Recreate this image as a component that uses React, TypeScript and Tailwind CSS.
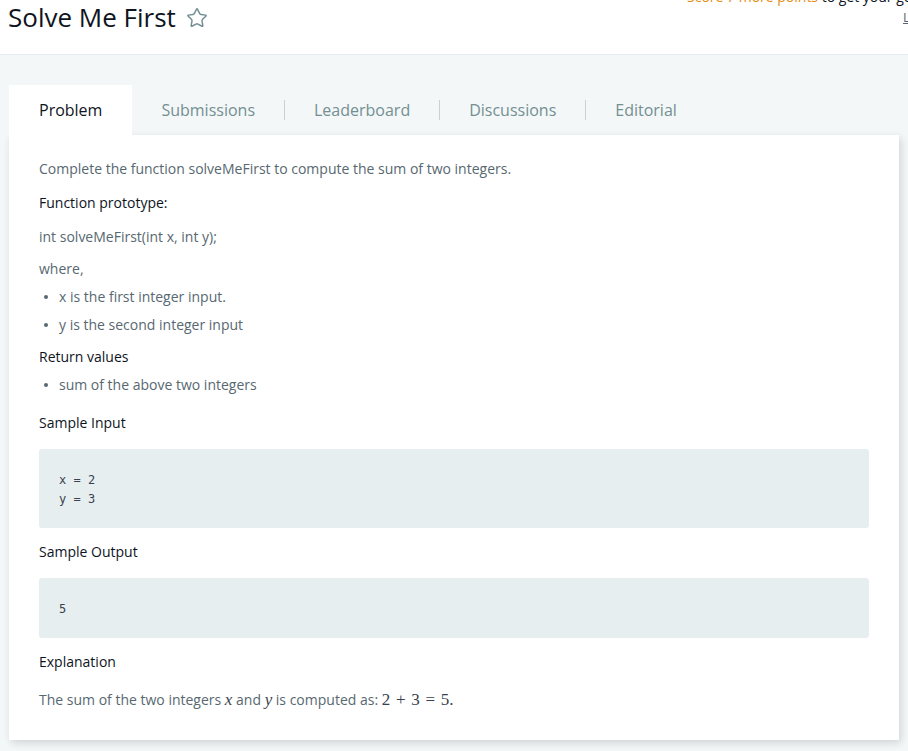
import React from "react";
import { Star } from "lucide-react";

const TABS = ["Problem", "Submissions", "Leaderboard", "Discussions", "Editorial"];

const Bullet = ({ children }: { children: React.ReactNode }) => (
  <div className="flex items-center leading-[20px]">
    <span className="ml-[5px] mr-[11px] h-[4px] w-[4px] rounded-full bg-[#576871]" />
    <span>{children}</span>
  </div>
);

const Pre = ({ lines }: { lines: string[] }) => (
  <pre className="rounded-[3px] bg-[#e7eeef] px-[20px] pt-[22px] pb-[19px] font-['DejaVu_Sans_Mono',monospace] text-[12px] leading-[19px] text-[#39424e]">
    {lines.join("\n")}
  </pre>
);

const MathOp = ({ children }: { children: React.ReactNode }) => (
  <span className="mx-[4px] inline-block w-[13px] text-center">{children}</span>
);

export default function App() {
  return (
    <div className="relative min-h-[751px] overflow-hidden bg-[#f3f7f7] font-['Open_Sans',sans-serif]">
      {/* Header */}
      <div className="relative h-[55px] border-b border-[#e6ecee] bg-white">
        <div className="flex items-center pl-[8px] pt-[1px]">
          <h1 className="text-[26px] leading-[32px] text-[#0e141e]">Solve Me First</h1>
          <Star className="ml-[10px] mt-[1px] h-[22px] w-[22px] text-[#738f93]" strokeWidth={1.6} />
        </div>
        <div className="absolute left-[687px] top-[-13px] whitespace-nowrap text-[14px] leading-[20px]">
          <span className="text-[#e38d13]">Score 7 more points</span>
          <span className="text-[#0e141e]"> to get your gold badge!</span>
        </div>
        <div className="absolute left-[903px] top-[8px] whitespace-nowrap text-[13px] leading-[18px] text-[#576871] underline">
          Learn more
        </div>
      </div>

      {/* Body */}
      <div className="px-[9px] pt-[30px] pb-[12px]">
        <div className="flex h-[50px] items-center">
          {TABS.map((tab, i) => (
            <React.Fragment key={tab}>
              {i > 1 && <span className="h-[20px] w-px bg-[#c9d1d4]" />}
              <div
                className={
                  i === 0
                    ? "flex h-full items-center bg-white px-[30px] text-[16px] text-[#0e141e]"
                    : "flex h-full items-center px-[29px] text-[16px] text-[#738f93]"
                }
              >
                {tab}
              </div>
            </React.Fragment>
          ))}
        </div>

        <div className="bg-white px-[30px] pt-[24px] pb-[30px] text-[14px] leading-[20px] text-[#576871] shadow-[2px_3px_8px_rgba(0,0,0,0.14)]">
          <p>Complete the function solveMeFirst to compute the sum of two integers.</p>
          <p className="mt-[14px] text-[#0e141e]">Function prototype:</p>
          <p className="mt-[14px]">int solveMeFirst(int x, int y);</p>
          <p className="mt-[12px]">where,</p>
          <div className="mt-[8px] flex flex-col gap-[8px]">
            <Bullet>x is the first integer input.</Bullet>
            <Bullet>y is the second integer input</Bullet>
          </div>
          <p className="mt-[12px] text-[#0e141e]">Return values</p>
          <div className="mt-[8px]">
            <Bullet>sum of the above two integers</Bullet>
          </div>

          <p className="mt-[18px] text-[#0e141e]">Sample Input</p>
          <div className="mt-[16px]">
            <Pre lines={["x = 2", "y = 3"]} />
          </div>

          <p className="mt-[14px] text-[#0e141e]">Sample Output</p>
          <div className="mt-[16px]">
            <Pre lines={["5"]} />
          </div>

          <p className="mt-[14px] text-[#0e141e]">Explanation</p>
          <p className="mt-[18px]">
            The sum of the two integers{" "}
            <span className="font-['Liberation_Serif',serif] text-[17px] italic text-[#39424e]">x</span> and{" "}
            <span className="font-['Liberation_Serif',serif] text-[17px] italic text-[#39424e]">y</span> is computed as:{" "}
            <span className="font-['Liberation_Serif',serif] text-[17px] text-[#39424e]">
              2<MathOp>+</MathOp>3<MathOp>=</MathOp>5.
            </span>
          </p>
        </div>
      </div>
    </div>
  );
}
